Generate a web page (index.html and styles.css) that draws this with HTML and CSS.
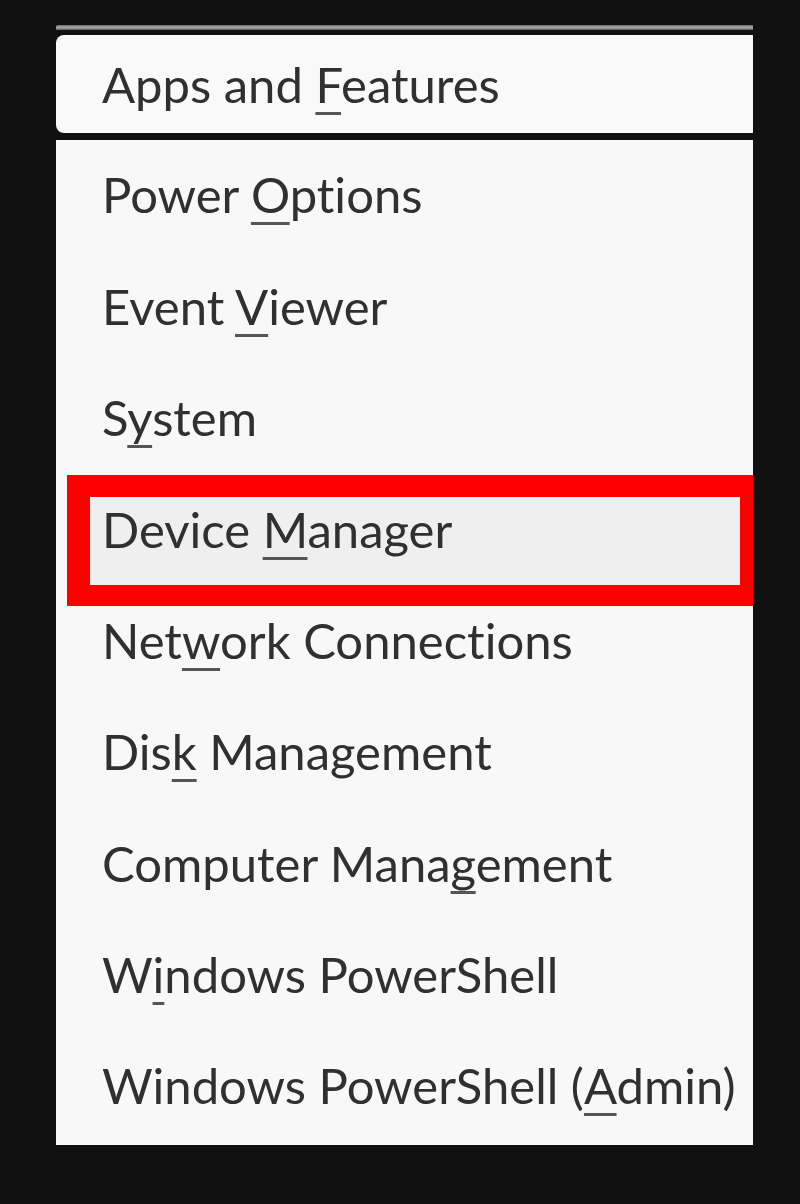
FILE: index.html
```html
<!DOCTYPE html>
<html>
<head>
<meta charset="utf-8">
<link rel="stylesheet" href="styles.css">
</head>
<body>
<div class="menu">
  <div class="top-edge"></div>
  <div class="item focused"><span class="label">Apps and <u>F</u>eatures</span></div>
  <div class="list">
    <div class="item"><span class="label">Power <u>O</u>ptions</span></div>
    <div class="item"><span class="label">Event <u>V</u>iewer</span></div>
    <div class="item"><span class="label">S<u>y</u>stem</span></div>
    <div class="item hover"><div class="callout"></div><span class="label">Device <u>M</u>anager</span></div>
    <div class="item"><span class="label">Net<u>w</u>ork Connections</span></div>
    <div class="item"><span class="label">Dis<u>k</u> Management</span></div>
    <div class="item"><span class="label">Computer Mana<u>g</u>ement</span></div>
    <div class="item"><span class="label">W<u>i</u>ndows PowerShell</span></div>
    <div class="item"><span class="label">Windows PowerShell (<u>A</u>dmin)</span></div>
  </div>
</div>
</body>
</html>
```
FILE: styles.css
```css
html, body {
  margin: 0;
  padding: 0;
  background: #111111;
}
body {
  width: 800px;
  height: 1204px;
  overflow: hidden;
  font-family: "Lato", "Noto Sans", sans-serif;
}
.menu {
  margin-left: 56px;
  width: 697px;
  padding-top: 25px;
}
.top-edge {
  height: 5px;
  background: linear-gradient(#6c6c6c, #a8a8a8 50%, #5a5a5a);
  border-radius: 2px 0 0 0;
}
.item {
  position: relative;
  height: 98px;
  display: flex;
  align-items: center;
  box-sizing: border-box;
  padding-left: 46px;
}
.focused {
  margin-top: 5px;
  background: #f9f9f9;
  border-radius: 8px 0 0 8px;
}
.list {
  margin-top: 7px;
  background: #f8f8f8;
  display: flex;
  flex-direction: column;
  gap: 13.4px;
  padding-top: 6px;
  padding-bottom: 10px;
  height: 1005px;
  box-sizing: border-box;
}
.label {
  position: relative;
  z-index: 1;
  font-size: 49px;
  color: #303030;
  white-space: nowrap;
  line-height: 1;
  margin-top: 0;
  font-variant-ligatures: none;
}
.label u {
  text-decoration: underline;
  text-decoration-thickness: 3px;
  text-underline-offset: 9px;
  text-decoration-skip-ink: none;
  text-decoration-color: #555;
}
.callout {
  position: absolute;
  left: 11px;
  right: 0;
  top: -5px;
  bottom: -28px;
  border-style: solid;
  border-color: #ff0000;
  border-width: 22px 13px 21px 23px;
  background: #efefef;
  z-index: 0;
}
```
